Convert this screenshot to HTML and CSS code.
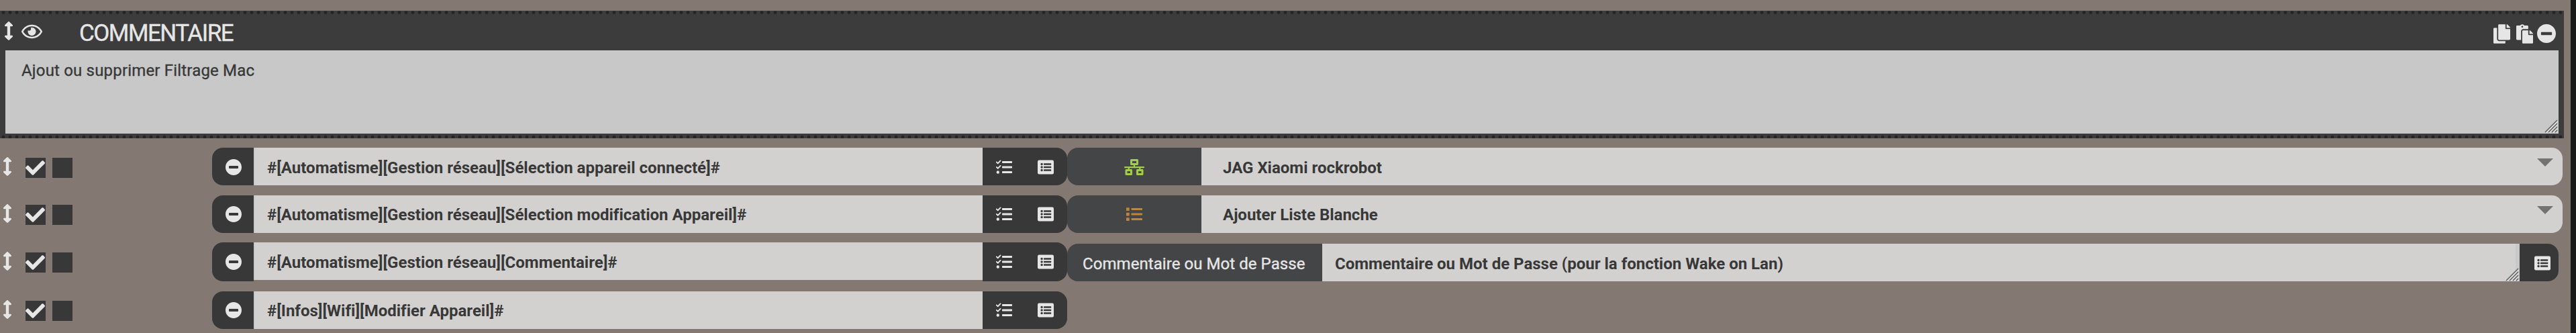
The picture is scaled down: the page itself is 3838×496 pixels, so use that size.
FILE: index.html
```
<!DOCTYPE html>
<html lang="fr">
<head>
<meta charset="utf-8">
<title>Commentaire</title>
<link rel="stylesheet" href="styles.css">
</head>
<body>
<svg class="defs" aria-hidden="true">
  <symbol id="arrows" viewBox="0 0 256 512"><path d="M214.059 377.941H168V134.059h46.059c21.382 0 32.09-25.851 16.971-40.971L144.971 7.029c-9.373-9.373-24.568-9.373-33.941 0L24.971 93.088c-15.119 15.119-4.411 40.971 16.971 40.971H88v243.882H41.941c-21.382 0-32.09 25.851-16.971 40.971l86.059 86.059c9.373 9.373 24.568 9.373 33.941 0l86.059-86.059c15.12-15.119 4.412-40.971-16.97-40.971z"/></symbol>
  <symbol id="eye" viewBox="0 0 576 512"><path d="M288 144a110.94 110.94 0 0 0-31.24 5 55.4 55.4 0 0 1 7.24 27 56 56 0 0 1-56 56 55.4 55.4 0 0 1-27-7.24A111.71 111.71 0 1 0 288 144zm284.52 97.4C518.29 135.59 410.93 64 288 64S57.68 135.64 3.48 241.41a32.35 32.35 0 0 0 0 29.19C57.71 376.41 165.07 448 288 448s230.32-71.64 284.52-177.41a32.35 32.35 0 0 0 0-29.19zM288 400c-98.65 0-189.09-55-237.93-144C98.91 167 189.34 112 288 112s189.09 55 237.93 144C477.1 345 386.66 400 288 400z"/></symbol>
  <symbol id="copy" viewBox="0 0 448 512"><path d="M320 448v40c0 13.255-10.745 24-24 24H24c-13.255 0-24-10.745-24-24V120c0-13.255 10.745-24 24-24h72v296c0 30.879 25.121 56 56 56h168zm0-344V0H152c-13.255 0-24 10.745-24 24v368c0 13.255 10.745 24 24 24h272c13.255 0 24-10.745 24-24V128H344c-13.2 0-24-10.8-24-24zm120.971-31.029L375.029 7.029A24 24 0 0 0 358.059 0H352v96h96v-6.059a24 24 0 0 0-7.029-16.97z"/></symbol>
  <symbol id="paste" viewBox="0 0 448 512"><path d="M128 184c0-30.879 25.122-56 56-56h136V56c0-13.255-10.745-24-24-24h-80.61C204.306 12.89 183.637 0 160 0s-44.306 12.89-55.39 32H24C10.745 32 0 42.745 0 56v336c0 13.255 10.745 24 24 24h104V184zm32-144c13.255 0 24 10.745 24 24s-10.745 24-24 24-24-10.745-24-24 10.745-24 24-24zm184 248h104v200c0 13.255-10.745 24-24 24H184c-13.255 0-24-10.745-24-24V184c0-13.255 10.745-24 24-24h136v104c0 13.2 10.8 24 24 24zm104-38.059V256h-96v-96h6.059a24 24 0 0 1 16.97 7.029l65.941 65.941a24.002 24.002 0 0 1 7.03 16.971z"/></symbol>
  <symbol id="minus" viewBox="8 8 496 496"><path d="M256 8C119 8 8 119 8 256s111 248 248 248 248-111 248-248S393 8 256 8zM124 296c-6.6 0-12-5.4-12-12v-56c0-6.6 5.4-12 12-12h264c6.6 0 12 5.4 12 12v56c0 6.6-5.4 12-12 12H124z"/></symbol>
  <symbol id="check" viewBox="0 65 512 382"><path d="M173.898 439.404l-166.4-166.4c-9.997-9.997-9.997-26.206 0-36.204l36.203-36.204c9.997-9.998 26.207-9.998 36.204 0L192 312.69 432.095 72.596c9.997-9.997 26.207-9.997 36.204 0l36.203 36.204c9.997 9.997 9.997 26.206 0 36.204l-294.4 294.401c-9.998 9.997-26.207 9.997-36.204-.001z"/></symbol>
  <symbol id="network" viewBox="0 0 640 512"><path d="M640 264v-16c0-8.84-7.16-16-16-16H344v-40h72c17.67 0 32-14.33 32-32V32c0-17.67-14.33-32-32-32H224c-17.67 0-32 14.33-32 32v128c0 17.67 14.33 32 32 32h72v40H16c-8.84 0-16 7.16-16 16v16c0 8.84 7.16 16 16 16h104v40H64c-17.67 0-32 14.33-32 32v128c0 17.67 14.33 32 32 32h160c17.67 0 32-14.33 32-32V352c0-17.67-14.33-32-32-32h-56v-40h304v40h-56c-17.67 0-32 14.33-32 32v128c0 17.67 14.33 32 32 32h160c17.67 0 32-14.33 32-32V352c0-17.67-14.33-32-32-32h-56v-40h104c8.84 0 16-7.16 16-16zM256 128V64h128v64H256zm-64 320H96v-64h96v64zm352 0h-96v-64h96v64z"/></symbol>
  <symbol id="tasks" viewBox="0 0 24 24"><path d="M.8 4.4l1.9 1.9L6.5 2.4M.8 11.9l1.9 1.9L6.5 9.9" fill="none" stroke="currentColor" stroke-width="1.9" stroke-linecap="round" stroke-linejoin="round"/><circle cx="2.8" cy="19.5" r="2.2"/><rect x="9" y="3" width="15" height="3" rx=".7"/><rect x="9" y="10.5" width="15" height="3" rx=".7"/><rect x="9" y="18" width="15" height="3" rx=".7"/></symbol>
  <symbol id="listalt" viewBox="0 0 24 24"><rect y="1.5" width="24" height="21" rx="2.2"/><g class="ink"><circle cx="6.1" cy="7.5" r="1.7"/><circle cx="6.1" cy="12" r="1.7"/><circle cx="6.1" cy="16.5" r="1.7"/><rect x="9" y="6.3" width="11.2" height="2.4" rx=".5"/><rect x="9" y="10.8" width="11.2" height="2.4" rx=".5"/><rect x="9" y="15.3" width="11.2" height="2.4" rx=".5"/></g></symbol>
  <symbol id="list" viewBox="0 0 24 24"><rect y="2.2" width="4.7" height="4.7" rx=".7"/><rect y="9.7" width="4.7" height="4.7" rx=".7"/><rect y="17.2" width="4.7" height="4.7" rx=".7"/><rect x="7.5" y="3" width="16.5" height="3" rx=".7"/><rect x="7.5" y="10.5" width="16.5" height="3" rx=".7"/><rect x="7.5" y="18" width="16.5" height="3" rx=".7"/></symbol>
  <symbol id="grip" viewBox="0 0 20 20"><path d="M2.5 19.5L19.5 2.5M7.5 19.5l12-12M12.5 19.5l7-7M17.5 19.5l2-2" stroke="#e2e2e2" stroke-width="1.4"/><path d="M1 19L19 1M6 19L19 6M11 19l8-8M16 19l3-3" stroke="#585b59" stroke-width="1.4"/></symbol>
</svg>

<main class="page">
  <section class="comment">
    <header class="comment-head">
      <svg class="i-arrows"><use href="#arrows"/></svg>
      <svg class="i-eye"><use href="#eye"/></svg>
      <h1>COMMENTAIRE</h1>
      <div class="tools">
        <svg class="i-file"><use href="#copy"/></svg>
        <svg class="i-file"><use href="#paste"/></svg>
        <svg class="i-remove"><use href="#minus"/></svg>
      </div>
    </header>
    <div class="area">Ajout ou supprimer Filtrage Mac<svg class="grip"><use href="#grip"/></svg></div>
  </section>

  <div class="row">
    <div class="lead"><svg class="i-arrows"><use href="#arrows"/></svg><span class="box"><svg class="i-check"><use href="#check"/></svg></span><span class="box"></span></div>
    <div class="group">
      <span class="btn first"><svg class="ic"><use href="#minus"/></svg></span>
      <span class="field">#[Automatisme][Gestion réseau][Sélection appareil connecté]#</span>
      <span class="btn last"><svg class="ic"><use href="#tasks"/></svg><svg class="ic"><use href="#listalt"/></svg></span>
    </div>
    <div class="option">
      <span class="label icon-label"><svg class="ic wide green"><use href="#network"/></svg></span>
      <span class="select">JAG Xiaomi rockrobot<i class="caret"></i></span>
    </div>
  </div>

  <div class="row second odd">
    <div class="lead"><svg class="i-arrows"><use href="#arrows"/></svg><span class="box"><svg class="i-check"><use href="#check"/></svg></span><span class="box"></span></div>
    <div class="group">
      <span class="btn first"><svg class="ic"><use href="#minus"/></svg></span>
      <span class="field">#[Automatisme][Gestion réseau][Sélection modification Appareil]#</span>
      <span class="btn last"><svg class="ic"><use href="#tasks"/></svg><svg class="ic"><use href="#listalt"/></svg></span>
    </div>
    <div class="option">
      <span class="label icon-label"><svg class="ic orange"><use href="#list"/></svg></span>
      <span class="select">Ajouter Liste Blanche<i class="caret"></i></span>
    </div>
  </div>

  <div class="row third">
    <div class="lead"><svg class="i-arrows"><use href="#arrows"/></svg><span class="box"><svg class="i-check"><use href="#check"/></svg></span><span class="box"></span></div>
    <div class="group">
      <span class="btn first"><svg class="ic"><use href="#minus"/></svg></span>
      <span class="field">#[Automatisme][Gestion réseau][Commentaire]#</span>
      <span class="btn last"><svg class="ic"><use href="#tasks"/></svg><svg class="ic"><use href="#listalt"/></svg></span>
    </div>
    <div class="option message">
      <span class="label text-label">Commentaire ou Mot de Passe</span>
      <span class="text">Commentaire ou Mot de Passe (pour la fonction Wake on Lan)<svg class="grip"><use href="#grip"/></svg></span>
      <span class="btn end"><svg class="ic"><use href="#listalt"/></svg></span>
    </div>
  </div>

  <div class="row fourth odd">
    <div class="lead"><svg class="i-arrows"><use href="#arrows"/></svg><span class="box"><svg class="i-check"><use href="#check"/></svg></span><span class="box"></span></div>
    <div class="group">
      <span class="btn first"><svg class="ic"><use href="#minus"/></svg></span>
      <span class="field">#[Infos][Wifi][Modifier Appareil]#</span>
      <span class="btn last"><svg class="ic"><use href="#tasks"/></svg><svg class="ic"><use href="#listalt"/></svg></span>
    </div>
  </div>
</main>
</body>
</html>
```
FILE: styles.css
```
* { box-sizing: border-box; }

body {
  margin: 0;
  height: 496px;
  overflow: hidden;
  background: #1a1a1a;
  color: #383838;
  font: 24px/56px Roboto, sans-serif;
  font-variant-ligatures: none;
}

svg { display: block; fill: currentColor; flex: none; }
.defs { position: absolute; width: 0; height: 0; }
.ink { fill: #383838; }

.page {
  width: 3830px;
  height: 496px;
  padding-top: 16px;
  background: #847872;
}

/* Comment block */
.comment {
  width: 3820px;
  height: 190px;
  padding: 0 8px;
  background:
    radial-gradient(circle, #252525 2.1px, transparent 2.9px) 0 -2.5px / 10px 10px repeat-x,
    radial-gradient(circle, #252525 2.1px, transparent 2.9px) 0 182.5px / 10px 10px repeat-x,
    #3c3c3c;
}

.comment-head {
  display: flex;
  height: 59px;
  margin-left: -2px;
  color: #e6e6e6;
}

.i-arrows { width: 14px; height: 28px; }
.comment-head .i-arrows { margin-top: 16px; }
.i-eye { width: 31px; height: 28px; margin: 17px 0 0 12px; }

h1 {
  margin: 7px 0 0 55px;
  font-weight: 400;
  font-size: 35px;
  line-height: 54px;
  letter-spacing: -1.5px;
}

h1, .area, .text-label { -webkit-text-stroke: .35px currentColor; }

.tools { display: flex; gap: 9px; margin: 20px 4px 0 auto; }
.i-file { width: 25px; height: 29px; }
.i-remove { width: 28px; height: 28px; margin-left: -3px; }

.area {
  position: relative;
  height: 124px;
  padding: 15px 24px;
  background: #c8c8c8;
  line-height: 30px;
  letter-spacing: .18px;
}

.grip { position: absolute; right: 1px; bottom: 1px; width: 20px; height: 20px; }

/* Rows */
.row {
  --nudge: 0px;
  display: grid;
  grid-template-columns: 316px 1274px 1fr;
  height: 56px;
  margin-top: 14px;
}
.odd { --nudge: -1px; }
.second { margin-top: 15px; }
.fourth { margin-top: 17px; }

.lead { display: flex; padding: calc(14px + var(--nudge)) 0 0 4px; color: #e6e6e6; }
.box { width: 30px; height: 30px; margin: 1px 0 0 10px; background: #383838; }
.i-arrows + .box { margin-left: 20px; }
.i-check { width: 29px; height: 22px; margin-top: 4px; }

.group { display: grid; grid-template-columns: 62px 1fr 126px; }

.btn {
  display: flex;
  padding-top: calc(17px + var(--nudge));
  background: #383838;
  color: #e6e6e6;
}
.first { border-radius: 16px 0 0 16px; padding-left: 20px; }
.last { border-radius: 0 16px 16px 0; padding-left: 20px; gap: 38px; }
.end { width: 58px; border-radius: 0 16px 16px 0; padding-left: 22px; }

.ic { width: 24px; height: 24px; }
.wide { width: 30px; }
.green { color: #a2cd4a; }
.orange { color: #bf853d; }

.field, .select, .text {
  padding-top: calc(2px + var(--nudge));
  background: #d2d1cf;
  font-weight: 700;
  line-height: 56px;
  height: 56px;
  white-space: nowrap;
}
.field { border-left: 2px solid #c8c8c8; padding-left: 18px; }

.option { display: flex; width: 2228px; }
.label { background: #444546; border-radius: 16px 0 0 16px; }
.icon-label {
  display: flex;
  justify-content: center;
  width: 200px;
  padding-top: calc(17px + var(--nudge));
}

.select {
  display: flex;
  flex: 1;
  justify-content: space-between;
  padding-left: 32px;
  padding-right: 14px;
  border-radius: 0 16px 16px 0;
}
.caret {
  width: 24px;
  height: 12px;
  margin-top: calc(14px - var(--nudge));
  background: #737373;
  clip-path: polygon(0 0, 100% 0, 50% 100%);
}

.message { width: 2222px; height: 56px; margin-top: 2px; }
.text-label {
  width: 380px;
  height: 56px;
  padding: 2px 0 0 23px;
  color: #e6e6e6;
  letter-spacing: .06px;
  white-space: nowrap;
}
.text { position: relative; flex: 1; padding-left: 19px; border-right: 6px solid #c8c8c8; }
.text .grip { right: -5px; bottom: 0; }
```
